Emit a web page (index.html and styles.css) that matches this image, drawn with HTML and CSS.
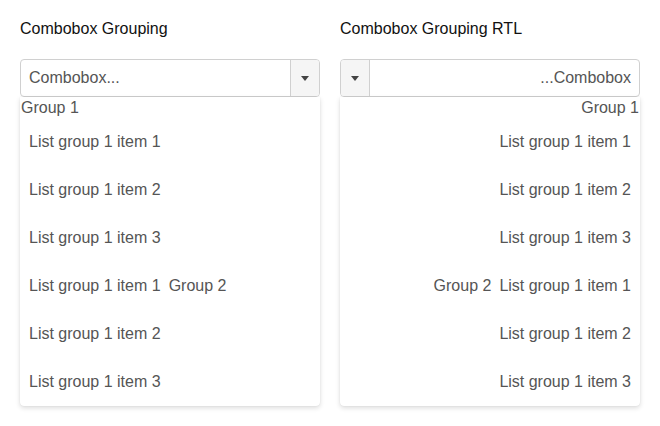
FILE: index.html
```html
<!DOCTYPE html>
<html lang="en">
<head>
<meta charset="utf-8">
<title>Combobox Grouping</title>
<link rel="stylesheet" href="styles.css">
</head>
<body>
<div class="page">
  <section class="demo">
    <h2 class="title">Combobox Grouping</h2>
    <div class="combo">
      <div class="field">
        <span class="value">Combobox...</span>
        <span class="btn"><svg width="8" height="5" viewBox="0 0 8 5"><path d="M0 0H8L4 5Z" fill="#444"/></svg></span>
      </div>
      <ul class="popup">
        <li class="group">Group 1</li>
        <li class="item">List group 1 item 1</li>
        <li class="item">List group 1 item 2</li>
        <li class="item">List group 1 item 3</li>
        <li class="item"><span class="label">List group 1 item 1</span><span class="inline-group">Group 2</span></li>
        <li class="item">List group 1 item 2</li>
        <li class="item">List group 1 item 3</li>
      </ul>
    </div>
  </section>
  <section class="demo">
    <h2 class="title">Combobox Grouping RTL</h2>
    <div class="combo" dir="rtl">
      <div class="field">
        <span class="value">Combobox...</span>
        <span class="btn"><svg width="8" height="5" viewBox="0 0 8 5"><path d="M0 0H8L4 5Z" fill="#444"/></svg></span>
      </div>
      <ul class="popup">
        <li class="group">Group 1</li>
        <li class="item">List group 1 item 1</li>
        <li class="item">List group 1 item 2</li>
        <li class="item">List group 1 item 3</li>
        <li class="item"><span class="label">List group 1 item 1</span><span class="inline-group">Group 2</span></li>
        <li class="item">List group 1 item 2</li>
        <li class="item">List group 1 item 3</li>
      </ul>
    </div>
  </section>
</div>
</body>
</html>
```

FILE: styles.css
```css
html, body {
  margin: 0;
  padding: 0;
  background: #fff;
}
body {
  font-family: "Liberation Sans", Arial, sans-serif;
  font-size: 16px;
}
.page {
  display: flex;
  gap: 20px;
  padding: 20px;
}
.demo {
  width: 300px;
}
.title {
  margin: 0 0 21px;
  font-size: 16px;
  font-weight: normal;
  line-height: 18px;
  color: #111;
}
.field {
  display: flex;
  height: 38px;
  box-sizing: border-box;
  border: 1px solid #d0d0d0;
  border-radius: 4px;
  overflow: hidden;
  color: #555;
}
.value {
  flex: 1;
  display: flex;
  align-items: center;
  padding: 0 8px;
}
.btn {
  width: 28px;
  flex: none;
  background: #f5f5f5;
  border-inline-start: 1px solid #d0d0d0;
  display: flex;
  align-items: center;
  justify-content: center;
}
.popup {
  list-style: none;
  margin: 0;
  padding: 0;
  background: #fff;
  border-radius: 0 0 4px 4px;
  box-shadow: 0 2px 5px rgba(0, 0, 0, 0.14), 0 0 1px rgba(0, 0, 0, 0.12);
  color: #555;
}
.group {
  line-height: 19px;
  padding: 1px 1px 1px;
}
.item {
  line-height: 48px;
  padding: 0 9px;
}
.label,
.inline-group {
  display: inline-block;
}
.inline-group {
  margin-inline-start: 8px;
}
```
